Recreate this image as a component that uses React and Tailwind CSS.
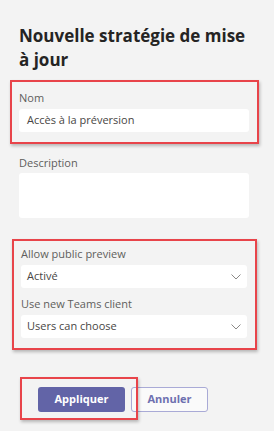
import React from "react";

function Chevron() {
  return (
    <svg width="10" height="6" viewBox="0 0 10 6" className="shrink-0">
      <path d="M0.5 0.5 L5 5 L9.5 0.5" fill="none" stroke="#8a8886" strokeWidth="1" />
    </svg>
  );
}

function Select({ value }) {
  return (
    <div className="h-[23px] w-[226px] bg-white rounded-[3px] flex items-center justify-between pl-[6px] pr-[6px] text-[11px] text-[#484644]">
      <span>{value}</span>
      <Chevron />
    </div>
  );
}

export default function App() {
  return (
    <div
      className="w-[274px] h-[431px] bg-[#f3f3f3] pl-[19px] pt-[24px] overflow-hidden text-[#252423]"
      style={{ fontFamily: '"Open Sans", "Noto Sans", sans-serif' }}
    >
      {/* Title */}
      <h1 className="text-[17px] font-bold leading-[24px] w-[240px] text-[#252423]">
        Nouvelle stratégie de mise à jour
      </h1>

      {/* Nom (boxed) */}
      <div className="mt-[8px] -ml-[9px] w-[249px] h-[64px] border-2 border-[#e8444a] shadow-[1px_2px_3px_rgba(0,0,0,0.25)] pl-[7px] pt-[8px]">
        <div className="text-[11px] leading-[15px] text-[#605e5c]">Nom</div>
        <div className="mt-[4px] h-[23px] w-[230px] bg-white rounded-[3px] flex items-center pl-[8px] text-[11px] text-[#484644]">
          Accès à la préversion
        </div>
      </div>

      {/* Description */}
      <div className="mt-[11px] text-[11px] leading-[15px] text-[#605e5c]">Description</div>
      <div className="mt-[3px] h-[45px] w-[230px] bg-white rounded-[3px]" />

      {/* Policy settings (boxed) */}
      <div className="mt-[21px] -ml-[7px] w-[245px] h-[111px] border-2 border-[#e8444a] shadow-[1px_2px_3px_rgba(0,0,0,0.25)] pl-[7px] pt-[5px]">
        <div className="text-[11px] leading-[15px] text-[#605e5c]">Allow public preview</div>
        <div className="mt-[4px]">
          <Select value="Activé" />
        </div>
        <div className="mt-[8px] text-[11px] leading-[15px] text-[#605e5c]">Use new Teams client</div>
        <div className="mt-[4px]">
          <Select value="Users can choose" />
        </div>
      </div>

      {/* Actions */}
      <div className="relative mt-[37px] flex gap-[6px] pl-[19px]">
        <button className="h-[25px] w-[87px] rounded-[3px] bg-[#6264a7] text-white text-[11px] font-bold">
          Appliquer
        </button>
        <button className="h-[25px] w-[77px] rounded-[3px] border border-[#a9aad6] bg-[#fafafa] text-[#6e70b0] text-[11px] font-bold">
          Annuler
        </button>
        <div className="absolute left-[1px] -top-[10px] w-[118px] h-[43px] border-2 border-[#e8444a] shadow-[1px_2px_3px_rgba(0,0,0,0.25)] pointer-events-none" />
      </div>
    </div>
  );
}
